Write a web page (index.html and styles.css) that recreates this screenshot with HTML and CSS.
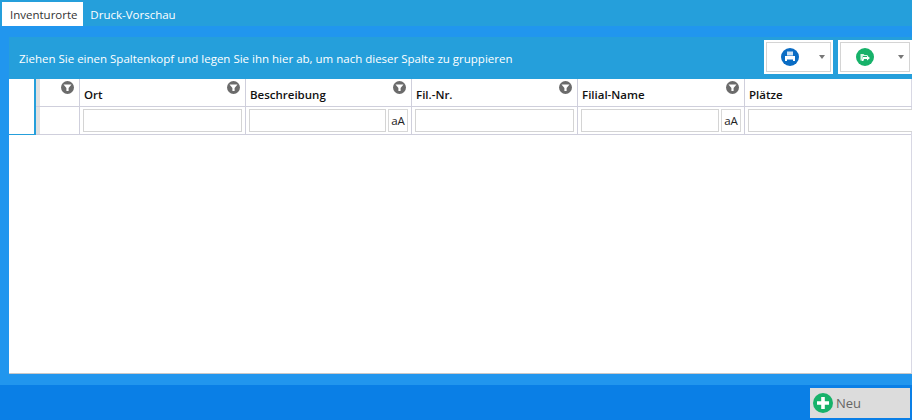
FILE: index.html
```html
<!DOCTYPE html>
<html lang="de">
<head>
<meta charset="utf-8">
<title>Inventurorte</title>
<link rel="stylesheet" href="styles.css">
</head>
<body>
<div class="app">
  <nav class="tabs">
    <div class="tab active">Inventurorte</div>
    <div class="tab">Druck-Vorschau</div>
  </nav>
  <main class="content">
    <div class="group-panel">
      <span class="group-hint">Ziehen Sie einen Spaltenkopf und legen Sie ihn hier ab, um nach dieser Spalte zu gruppieren</span>
      <div class="tools">
        <button class="tool">
          <span class="tool-inner">
            <svg class="tool-icon" viewBox="0 0 18 18"><circle cx="9" cy="9" r="9" fill="#0a6cc4"/><rect x="6" y="3.5" width="6" height="4" fill="#cfe3f5"/><path d="M4 8h10v5H4z" fill="#fff"/><rect x="6" y="11.5" width="6" height="1.5" fill="#0a6cc4"/></svg>
            <span class="caret"></span>
          </span>
        </button>
        <button class="tool">
          <span class="tool-inner">
            <svg class="tool-icon" viewBox="0 0 18 18"><circle cx="9" cy="9" r="9" fill="#17b26a"/><path d="M4.5 6h3l1 1h3v1H7l-1.5 4.5h-1z" fill="#d8f5e6"/><path d="M5.5 13l1.3-4H11V7.5L14 10l-3 2.5V11H8l-.6 2z" fill="#fff"/></svg>
            <span class="caret"></span>
          </span>
        </button>
      </div>
    </div>
    <div class="grid">
      <div class="grid-head">
        <div class="indent"></div>
        <div class="row-columns">
          <div class="rows header-row">
            <div class="cell sel"><svg class="filter"><use href="#funnel"/></svg></div>
            <div class="cell c1"><b>Ort</b><svg class="filter"><use href="#funnel"/></svg></div>
            <div class="cell c2"><b>Beschreibung</b><svg class="filter"><use href="#funnel"/></svg></div>
            <div class="cell c3"><b>Fil.-Nr.</b><svg class="filter"><use href="#funnel"/></svg></div>
            <div class="cell c4"><b>Filial-Name</b><svg class="filter"><use href="#funnel"/></svg></div>
            <div class="cell c5"><b>Plätze</b><svg class="filter"><use href="#funnel"/></svg></div>
          </div>
          <div class="rows filter-row">
            <div class="cell sel"></div>
            <div class="cell c1"><input class="field"></div>
            <div class="cell c2"><input class="field"><span class="case">aA</span></div>
            <div class="cell c3"><input class="field"></div>
            <div class="cell c4"><input class="field"><span class="case">aA</span></div>
            <div class="cell c5"><input class="field"></div>
          </div>
        </div>
      </div>
    </div>
  </main>
  <footer class="footer">
    <button class="new">
      <svg class="new-icon" viewBox="0 0 20 20"><circle cx="10" cy="10" r="10" fill="#17b26a"/><path d="M8.2 4h3.6v4.2H16v3.6h-4.2V16H8.2v-4.2H4V8.2h4.2z" fill="#fff"/></svg>
      <span>Neu</span>
    </button>
  </footer>
</div>
<svg class="defs" width="0" height="0"><symbol id="funnel" viewBox="0 0 13 13"><circle cx="6.5" cy="6.5" r="6.5" fill="#6b6b6b"/><path d="M2.5 3.5h8L7.6 7v3H5.4V7z" fill="#fff"/></symbol></svg>
</body>
</html>
```
FILE: styles.css
```css
* { box-sizing: border-box; }
html, body { margin: 0; height: 100%; }
body { font-family: "Open Sans", "Noto Sans", sans-serif; font-size: 11.5px; overflow: hidden; }
.defs { display: block; height: 0; }
.app { width: 912px; height: 420px; display: flex; flex-direction: column; background: #2196ee; }

.tabs { height: 26px; background: #259fdb; display: flex; padding: 2px 0 0 2px; flex: none; }
.tab { height: 24px; padding: 0 8px; line-height: 25px; color: #fff; width: 81px; text-align: center; white-space: nowrap; }
.tab + .tab { width: 100px; margin-left: 0; padding: 0; }
.tab.active { background: #fff; color: #333; }

.content { flex: 1; display: flex; flex-direction: column; padding: 11px 0 11px 9px; min-height: 0; }
.group-panel { height: 42px; background: #259fdb; display: flex; align-items: flex-start; justify-content: space-between; flex: none; }
.group-hint { color: #fff; padding: 14px 0 0 10px; white-space: nowrap; }
.tools { display: flex; gap: 5px; padding-top: 3px; }
.tool { width: 69px; height: 34px; border: 0; background: #fff; padding: 2px; display: block; }
.tools .tool:last-child { width: 74px; }
.tool-inner { display: flex; align-items: center; height: 100%; border: 1px solid #d4d4d4; padding-left: 14px; position: relative; }
.tools .tool:last-child .tool-inner { padding-left: 15px; }
.tool-icon { width: 18px; height: 18px; display: block; }
.caret { position: absolute; right: 5px; top: 12px; border-style: solid; border-width: 4px 3px 0; border-color: #777 transparent transparent; }

.grid { flex: 1; background: #fff; min-height: 0; border-right: 1px solid #d8d8e4; border-bottom: 1px solid #c8c8c8; }
.grid-head { display: flex; height: 56px; border-bottom: 1px solid #cfcfdc; }
.indent { width: 27px; flex: none; border-right: 2px solid #259fdb; border-bottom: 1px solid #259fdb; margin-bottom: -1px; }
.row-columns { flex: 1; display: flex; flex-direction: column; }
.rows { display: flex; }
.header-row { height: 28px; border-bottom: 1px solid #cfcfdc; }
.filter-row { height: 27px; }
.cell { position: relative; display: flex; align-items: center; gap: 2px; border-right: 1px solid #cfcfdc; padding: 0 3px; }
.cell:last-child { border-right: 0; }
.sel { width: 44px; background: linear-gradient(to right, #e1e1e1 4px, #fff 4px); }
.c1 { width: 166px; }
.c2 { width: 166px; }
.c3 { width: 166px; }
.c4 { width: 167px; }
.c5 { flex: 1; }
.header-row b { font-weight: 600; color: #111; font-size: 11.5px; padding: 4px 0 0 1px; }
.filter { position: absolute; right: 5px; top: 2px; width: 13px; height: 13px; }
.field { flex: 1; min-width: 0; height: 23px; border: 1px solid #d4d4d4; background: #fff; padding: 0; display: block; border-radius: 0; outline: 0; }
.case { flex: none; width: 20px; height: 23px; border: 1px solid #d8d8d8; font-size: 11.5px; line-height: 21px; text-align: center; color: #222; }

.footer { height: 35px; flex: none; background: #0a7fe6; display: flex; justify-content: flex-end; padding: 3px 2px 2px 0; }
.new { width: 100px; height: 30px; border: 0; padding: 0 0 0 3px; background: #dcdcdc; display: flex; align-items: center; gap: 3px; color: #666; font: 13px "Open Sans", sans-serif; }
.new-icon { width: 20px; height: 20px; display: block; }
```
